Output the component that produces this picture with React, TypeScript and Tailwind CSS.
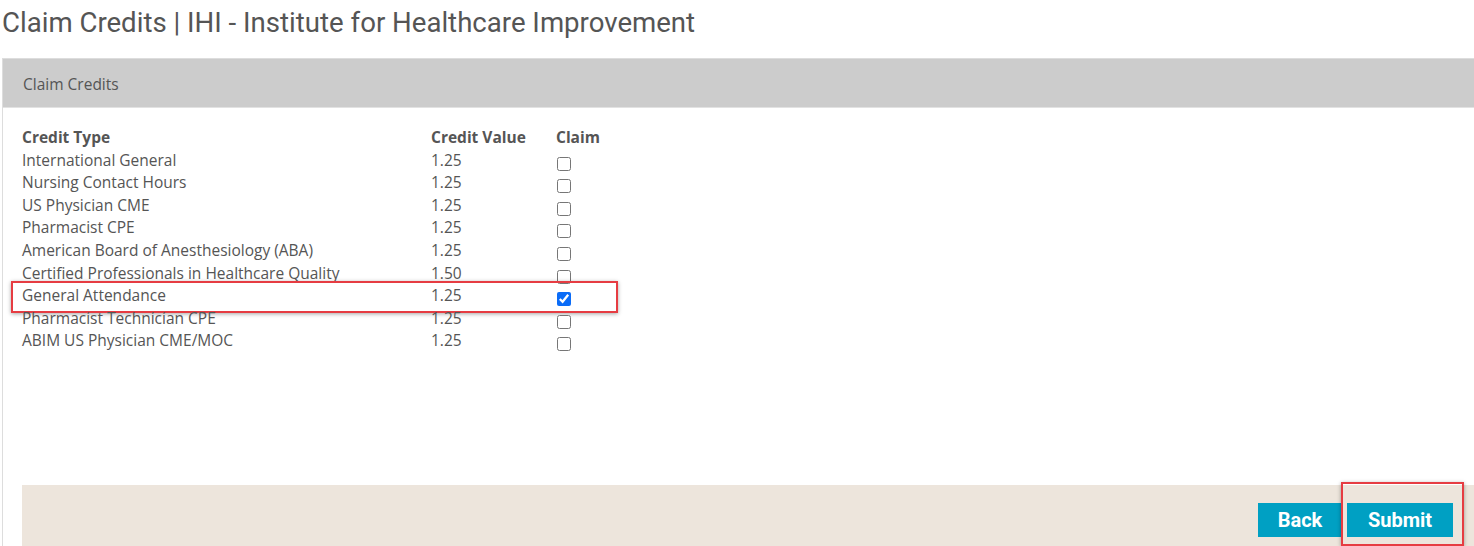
import React, { useState } from "react";

type Credit = {
  id: number;
  name: string;
  value: string;
};

const credits: Credit[] = [
  { id: 1, name: "International General", value: "1.25" },
  { id: 2, name: "Nursing Contact Hours", value: "1.25" },
  { id: 3, name: "US Physician CME", value: "1.25" },
  { id: 4, name: "Pharmacist CPE", value: "1.25" },
  { id: 5, name: "American Board of Anesthesiology (ABA)", value: "1.25" },
  { id: 6, name: "Certified Professionals in Healthcare Quality", value: "1.50" },
  { id: 7, name: "General Attendance", value: "1.25" },
  { id: 8, name: "Pharmacist Technician CPE", value: "1.25" },
  { id: 9, name: "ABIM US Physician CME/MOC", value: "1.25" },
];

const App: React.FC = () => {
  const [claimed, setClaimed] = useState<number[]>([7]);

  const toggle = (id: number) => {
    setClaimed((prev) =>
      prev.includes(id) ? prev.filter((c) => c !== id) : [...prev, id]
    );
  };

  return (
    <div className="min-h-[546px] bg-white overflow-hidden">
      <h1 className="pl-[2px] pt-[1px] h-[58px] text-[27.6px] leading-[43px] text-[#555] font-['Roboto',sans-serif]">
        Claim Credits | IHI - Institute for Healthcare Improvement
      </h1>

      <div className="ml-[2px] border-l border-t border-[#dddddd] font-['Open_Sans',sans-serif] text-[15.5px] text-[#555]">
        {/* panel header */}
        <div className="h-[49px] bg-[#cccccc] border-b border-[#e2e2e2] pl-[20px] pt-[3px] flex items-center">
          Claim Credits
        </div>

        <div className="pl-[19px] pt-[18px]">
          <div className="flex leading-[22.6px] font-bold">
            <div className="w-[409px]">Credit Type</div>
            <div className="w-[125px]">Credit Value</div>
            <div>Claim</div>
          </div>

          {credits.map((credit) => (
            <div key={credit.id} className="relative flex h-[22.6px] leading-[22.6px]">
              <div className="w-[409px] whitespace-nowrap">{credit.name}</div>
              <div className="w-[125px]">{credit.value}</div>
              <div className="flex items-start pt-[8px]">
                <input
                  type="checkbox"
                  checked={claimed.includes(credit.id)}
                  onChange={() => toggle(credit.id)}
                  className="m-0 ml-[1px] w-[14px] h-[14px] accent-[#0b6cf7]"
                />
              </div>
              {credit.id === 7 && (
                <span className="pointer-events-none absolute left-[-11px] top-[-3px] w-[607px] h-[32px] border-2 border-[#e63c42] shadow-[0_1px_4px_rgba(0,0,0,0.35)]" />
              )}
            </div>
          ))}

          <div className="h-[133px]" />

          {/* footer actions */}
          <div className="h-[70px] bg-[#ede5dc] flex justify-end items-start pt-[18px] pr-[21px] gap-[5px] font-['Roboto',sans-serif]">
            <button className="w-[84px] h-[34px] bg-[#00a0c3] text-white text-[20px] font-bold">
              Back
            </button>
            <div className="relative">
              <button className="w-[106px] h-[34px] bg-[#00a0c3] text-white text-[20px] font-bold">
                Submit
              </button>
              <span className="pointer-events-none absolute left-[-6px] top-[-21px] w-[123px] h-[64px] border-2 border-[#e63c42] shadow-[0_1px_4px_rgba(0,0,0,0.35)]" />
            </div>
          </div>
        </div>
      </div>
    </div>
  );
};

export default App;
